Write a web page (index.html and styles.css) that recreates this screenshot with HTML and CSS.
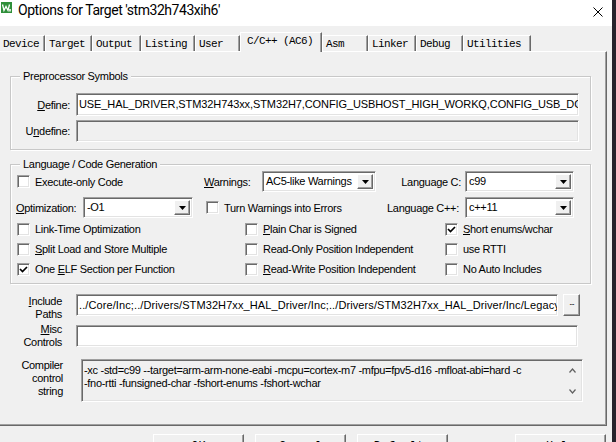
FILE: index.html
```html
<!DOCTYPE html>
<html>
<head>
<meta charset="utf-8">
<title>Options for Target</title>
<link rel="stylesheet" href="styles.css">
</head>
<body>
<div class="window">
  <div class="titlebar">
    <svg class="appicon" viewBox="0 0 11 11" width="11" height="11">
      <rect x="0" y="0" width="11" height="11" fill="#2f8f3a"/>
      <polyline points="1.5,2.5 3,8.5 5,4.5 7,8.5 8.5,2.5" fill="none" stroke="#fff" stroke-width="1.3"/>
      <rect x="8" y="7" width="2" height="2.5" fill="#cfe9cf"/>
    </svg>
    <span class="title">Options for Target 'stm32h743xih6'</span>
    <svg class="close" viewBox="0 0 10 10" width="10" height="10">
      <path d="M0.5 0.5 L9.5 9.5 M9.5 0.5 L0.5 9.5" stroke="#000" stroke-width="1" fill="none"/>
    </svg>
  </div>

  <div class="tabs">
    <span class="tab t-device">Device</span>
    <span class="tab t-target">Target</span>
    <span class="tab t-output">Output</span>
    <span class="tab t-listing">Listing</span>
    <span class="tab t-user">User</span>
    <span class="tab active t-cc">C/C++ (AC6)</span>
    <span class="tab t-asm">Asm</span>
    <span class="tab t-linker">Linker</span>
    <span class="tab t-debug">Debug</span>
    <span class="tab t-util">Utilities</span>
  </div>

  <div class="panel">
    <div class="group group-pre">
      <span class="legend">Preprocessor Symbols</span>
      <div class="field-row">
        <span class="field-label"><u>D</u>efine:</span>
        <div class="edit edit-define"><span class="edit-text text-define">USE_HAL_DRIVER,STM32H743xx,STM32H7,CONFIG_USBHOST_HIGH_WORKQ,CONFIG_USB_DCACHE_ENABLE</span></div>
      </div>
      <div class="field-row">
        <span class="field-label">U<u>n</u>define:</span>
        <div class="edit edit-define disabled"></div>
      </div>
    </div>

    <div class="group group-lang">
      <span class="legend">Language / Code Generation</span>
      <div class="row row1">
        <label class="chk cell-a"><span class="box"></span><span>Execute-only Code</span></label>
        <span class="lbl-warn"><u>W</u>arnings:</span>
        <div class="combo combo-warn"><span class="combo-text">AC5-like Warnings</span><span class="combo-btn"><svg viewBox="0 0 7 4" width="7" height="4"><path d="M0 0 H7 L3.5 4 Z" fill="#000"/></svg></span></div>
        <span class="lbl-lang">Language C:</span>
        <div class="combo combo-lang"><span class="combo-text">c99</span><span class="combo-btn"><svg viewBox="0 0 7 4" width="7" height="4"><path d="M0 0 H7 L3.5 4 Z" fill="#000"/></svg></span></div>
      </div>
      <div class="row row2">
        <span class="lbl-opt"><u>O</u>ptimization:</span>
        <div class="combo combo-opt"><span class="combo-text">-O1</span><span class="combo-btn"><svg viewBox="0 0 7 4" width="7" height="4"><path d="M0 0 H7 L3.5 4 Z" fill="#000"/></svg></span></div>
        <label class="chk cell-turn"><span class="box"></span><span>Turn Warnings into Errors</span></label>
        <span class="lbl-langpp">Language C++:</span>
        <div class="combo combo-lang"><span class="combo-text">c++11</span><span class="combo-btn"><svg viewBox="0 0 7 4" width="7" height="4"><path d="M0 0 H7 L3.5 4 Z" fill="#000"/></svg></span></div>
      </div>
      <div class="row row-chk">
        <label class="chk col1"><span class="box"></span><span>Link-Time Optimization</span></label>
        <label class="chk col2"><span class="box"></span><span><u>P</u>lain Char is Signed</span></label>
        <label class="chk col3"><span class="box"><svg viewBox="0 0 9 9" width="9" height="9"><path d="M1 4 L3.5 6.5 L8 2" fill="none" stroke="#000" stroke-width="1.7"/></svg></span><span><u>S</u>hort enums/wchar</span></label>
      </div>
      <div class="row row-chk">
        <label class="chk col1"><span class="box"></span><span><u>S</u>plit Load and Store Multiple</span></label>
        <label class="chk col2"><span class="box"></span><span>Read-Only Position Independent</span></label>
        <label class="chk col3"><span class="box"></span><span>use RTTI</span></label>
      </div>
      <div class="row row-chk">
        <label class="chk col1"><span class="box"><svg viewBox="0 0 9 9" width="9" height="9"><path d="M1 4 L3.5 6.5 L8 2" fill="none" stroke="#000" stroke-width="1.7"/></svg></span><span>One <u>E</u>LF Section per Function</span></label>
        <label class="chk col2"><span class="box"></span><span><u>R</u>ead-Write Position Independent</span></label>
        <label class="chk col3"><span class="box"></span><span>No Auto Includes</span></label>
      </div>
    </div>

    <div class="paths">
      <div class="path-row row-include">
        <span class="path-label"><u>I</u>nclude<br>Paths</span>
        <div class="edit edit-include"><span class="edit-text text-include">../Core/Inc;../Drivers/STM32H7xx_HAL_Driver/Inc;../Drivers/STM32H7xx_HAL_Driver/Inc/Legacy;../Middlewares</span></div>
        <span class="dots-btn">...</span>
      </div>
      <div class="path-row row-misc">
        <span class="path-label"><u>M</u>isc<br>Controls</span>
        <div class="edit edit-misc"></div>
      </div>
      <div class="path-row row-compiler">
        <span class="path-label">Compiler<br>control<br>string</span>
        <div class="edit edit-compiler">
          <div class="compiler-text">-xc -std=c99 --target=arm-arm-none-eabi -mcpu=cortex-m7 -mfpu=fpv5-d16 -mfloat-abi=hard -c<br>-fno-rtti -funsigned-char -fshort-enums -fshort-wchar</div>
          <div class="scroll">
            <svg viewBox="0 0 7 5" width="7" height="5"><polyline points="0.5,4.5 3.5,1 6.5,4.5" fill="none" stroke="#606060" stroke-width="1.2"/></svg>
            <svg viewBox="0 0 7 5" width="7" height="5"><polyline points="0.5,0.5 3.5,4 6.5,0.5" fill="none" stroke="#606060" stroke-width="1.2"/></svg>
          </div>
        </div>
      </div>
    </div>
  </div>

  <div class="buttons">
    <span class="btn b-ok">OK</span>
    <span class="btn b-cancel">Cancel</span>
    <span class="btn b-defaults">Defaults</span>
    <span class="btn b-help">Help</span>
  </div>
</div>
</body>
</html>
```
FILE: styles.css
```css
* { box-sizing: border-box; }
html, body { margin: 0; padding: 0; }
body {
  width: 616px;
  height: 442px;
  overflow: hidden;
  background: #27232c;
  font-family: "Liberation Sans", Arial, sans-serif;
  font-size: 11px;
  letter-spacing: -0.3px;
  color: #000;
}
u { text-decoration: underline; text-underline-offset: 1px; }

.window {
  width: 612px;
  height: 442px;
  background: #f0f0f0;
  overflow: hidden;
}

/* title bar */
.titlebar {
  height: 26px;
  background: #fff;
  display: flex;
  align-items: flex-start;
}
.appicon { margin: 2px 6px 0 1px; flex: none; }
.title {
  font-family: Roboto, "Noto Sans", sans-serif;
  font-size: 14px;
  letter-spacing: -0.45px;
  line-height: 18px;
  margin-top: 1px;
  color: #000;
}
.close { margin: 7px 9px 0 auto; flex: none; }

/* tabs */
.tabs {
  height: 25px;
  display: flex;
  align-items: flex-end;
  margin-left: -1px;
}
.tab {
  height: 16px;
  border-top: 1px solid #fff;
  border-left: 1px solid #fff;
  border-right: 1px solid #696969;
  box-shadow: inset -1px 0 0 #a0a0a0;
  font-family: "Liberation Mono", "Courier New", monospace;
  font-size: 11px;
  letter-spacing: -0.6px;
  line-height: 13px;
  padding: 2px 0 0 3px;
  white-space: nowrap;
  overflow: hidden;
}
.tab.active {
  height: 20px;
  margin-bottom: -1px;
  padding: 2px 0 0 6px;
  background: #f0f0f0;
  position: relative;
  z-index: 2;
}
.t-device { width: 46px; }
.t-target { width: 47px; }
.t-output { width: 49px; }
.t-listing { width: 54px; }
.t-user { width: 45px; }
.t-cc { width: 82px; }
.t-asm { width: 46px; }
.t-linker { width: 48px; }
.t-debug { width: 47px; }
.t-util { width: 68px; }

/* panel */
.panel {
  width: 607px;
  height: 375px;
  border-top: 1px solid #fff;
  border-right: 1px solid #696969;
  border-bottom: 1px solid #696969;
  box-shadow: inset -1px -1px 0 #a0a0a0;
  padding-top: 24px;
  position: relative;
}

/* group boxes */
.group {
  position: relative;
  margin-left: 10px;
  width: 581px;
  border: 1px solid #c8c8c8;
  box-shadow: inset 1px 1px 0 #fff, 1px 1px 0 #fff;
}
.legend {
  position: absolute;
  top: -7px;
  left: 9px;
  padding: 0 3px;
  background: #f0f0f0;
  line-height: 13px;
  white-space: nowrap;
}
.group-pre {
  height: 74px;
  padding-top: 16px;
}
.field-row {
  display: flex;
  align-items: center;
  margin-bottom: 4px;
}
.field-label {
  width: 59px;
  margin-right: 6px;
  text-align: right;
  white-space: nowrap;
}

/* sunken edits */
.edit {
  background: #fff;
  border: 1px solid;
  border-color: #a0a0a0 #fff #fff #a0a0a0;
  box-shadow: inset 1px 1px 0 #696969, inset -1px -1px 0 #e3e3e3;
  height: 23px;
  overflow: hidden;
  white-space: nowrap;
}
.edit.disabled { background: #f0f0f0; height: 22px; }
.edit-text {
  display: block;
  padding: 4px 0 0 2px;
  line-height: 13px;
  overflow: hidden;
}
.text-define { letter-spacing: -0.1px; }
.text-include { letter-spacing: 0.1px; }
.edit-define { width: 503px; }

.group-lang {
  margin-top: 14px;
  height: 120px;
  padding-top: 6px;
}
.row { display: flex; align-items: center; }
.row1 { height: 21px; padding-left: 6px; }
.row2 { height: 21px; padding-left: 5px; margin-top: 5px; }
.row-chk { height: 20px; padding-left: 6px; }
.row2 + .row-chk { margin-top: 1px; }

.chk {
  display: flex;
  align-items: center;
  white-space: nowrap;
}
.box {
  width: 13px;
  height: 13px;
  flex: none;
  margin-right: 5px;
  background: #fff;
  border: 1px solid;
  border-color: #a0a0a0 #fff #fff #a0a0a0;
  box-shadow: inset 1px 1px 0 #696969, inset -1px -1px 0 #e3e3e3;
  display: flex;
  align-items: center;
  justify-content: center;
}
.cell-a { width: 187px; }
.lbl-warn { width: 58px; white-space: nowrap; }
.lbl-lang { width: 85px; text-align: right; margin-right: 4px; white-space: nowrap; }
.lbl-opt { width: 67px; white-space: nowrap; }
.cell-turn { margin-left: 13px; width: 174px; }
.lbl-langpp { width: 79px; text-align: right; margin-right: 6px; white-space: nowrap; }

.combo {
  display: flex;
  height: 21px;
  background: #fff;
  border: 1px solid;
  border-color: #a0a0a0 #fff #fff #a0a0a0;
  box-shadow: inset 1px 1px 0 #696969, inset -1px -1px 0 #e3e3e3;
  padding: 2px;
}
.combo-warn { width: 114px; }
.combo-lang { width: 109px; }
.combo-opt { width: 110px; }
.combo-text {
  flex: 1;
  padding-left: 1px;
  line-height: 15px;
  white-space: nowrap;
  overflow: hidden;
}
.combo-btn {
  width: 16px;
  flex: none;
  background: #f0f0f0;
  border: 1px solid;
  border-color: #fff #696969 #696969 #fff;
  box-shadow: inset -1px -1px 0 #a0a0a0;
  display: flex;
  align-items: center;
  justify-content: center;
}

.col1 { width: 228px; }
.col2 { width: 200px; }

/* paths */
.paths { margin-top: 10px; }
.path-row { display: flex; align-items: flex-start; height: 22px; }
.path-label {
  width: 62px;
  text-align: right;
  line-height: 13px;
  flex: none;
}
.row-include .path-label { margin-top: 1px; }
.edit-include { width: 482px; height: 22px; margin-left: 14px; }
.dots-btn {
  width: 17px;
  height: 22px;
  margin-left: 5px;
  border: 1px solid;
  border-color: #fff #696969 #696969 #fff;
  box-shadow: inset -1px -1px 0 #a0a0a0;
  background: #f0f0f0;
  font-size: 9px;
  letter-spacing: -1px;
  line-height: 14px;
  text-align: center;
  flex: none;
  overflow: hidden;
}
.row-misc { margin-top: 9px; }
.row-misc .path-label { margin-top: -2px; }
.edit-misc { width: 502px; height: 22px; margin-left: 14px; }
.row-compiler { margin-top: 12px; height: 43px; }
.row-compiler .path-label { width: 63px; margin-top: 0; }
.edit-compiler {
  width: 502px;
  height: 43px;
  margin-left: 18px;
  background: #f0f0f0;
  display: flex;
}
.compiler-text {
  flex: 1;
  padding: 4px 0 0 2px;
  line-height: 13px;
  white-space: nowrap;
  overflow: hidden;
  letter-spacing: -0.3px;
}
.scroll {
  width: 20px;
  flex: none;
  display: flex;
  flex-direction: column;
  align-items: center;
  justify-content: space-between;
  padding: 8px 0 7px;
}

/* bottom buttons */
.buttons {
  display: flex;
  margin-top: 8px;
  padding-left: 153px;
}
.btn {
  width: 91px;
  height: 23px;
  border: 1px solid;
  border-color: #fff #696969 #696969 #fff;
  box-shadow: inset -1px -1px 0 #a0a0a0;
  font-family: "Liberation Mono", monospace;
  font-size: 12px;
  letter-spacing: 0;
  line-height: 14px;
  text-align: center;
  padding-top: 5px;
}
.b-cancel, .b-defaults { margin-left: 11px; }
.b-help { margin-left: 67px; }
```
